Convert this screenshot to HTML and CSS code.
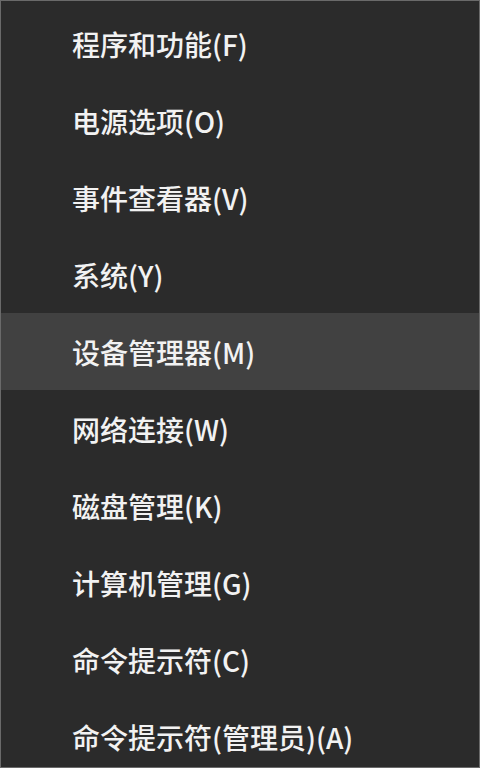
FILE: index.html
```html
<!DOCTYPE html>
<html lang="zh-CN">
<head>
<meta charset="utf-8">
<title>菜单</title>
<link rel="stylesheet" href="styles.css">
</head>
<body>
<div class="menu">
  <div class="item">程序和功能(F)</div>
  <div class="item">电源选项(O)</div>
  <div class="item">事件查看器(V)</div>
  <div class="item">系统(Y)</div>
  <div class="item active">设备管理器(M)</div>
  <div class="item">网络连接(W)</div>
  <div class="item">磁盘管理(K)</div>
  <div class="item">计算机管理(G)</div>
  <div class="item">命令提示符(C)</div>
  <div class="item">命令提示符(管理员)(A)</div>
</div>
</body>
</html>
```
FILE: styles.css
```css
html, body {
  margin: 0;
  padding: 0;
  background: #2b2b2b;
}
.menu {
  box-sizing: border-box;
  width: 480px;
  height: 768px;
  overflow: hidden;
  background: #2b2b2b;
  border: 1px solid #6a6a6a;
  padding-top: 4px;
  display: flex;
  flex-direction: column;
}
.item {
  flex: 0 0 77px;
  height: 77px;
  display: flex;
  align-items: center;
  padding-left: 71px;
  color: #f2f2f2;
  font-family: "Noto Sans CJK SC", "Noto Sans", sans-serif;
  font-size: 28px;
  font-weight: 500;
  white-space: nowrap;
}
.item.active {
  background: #414141;
}
```
